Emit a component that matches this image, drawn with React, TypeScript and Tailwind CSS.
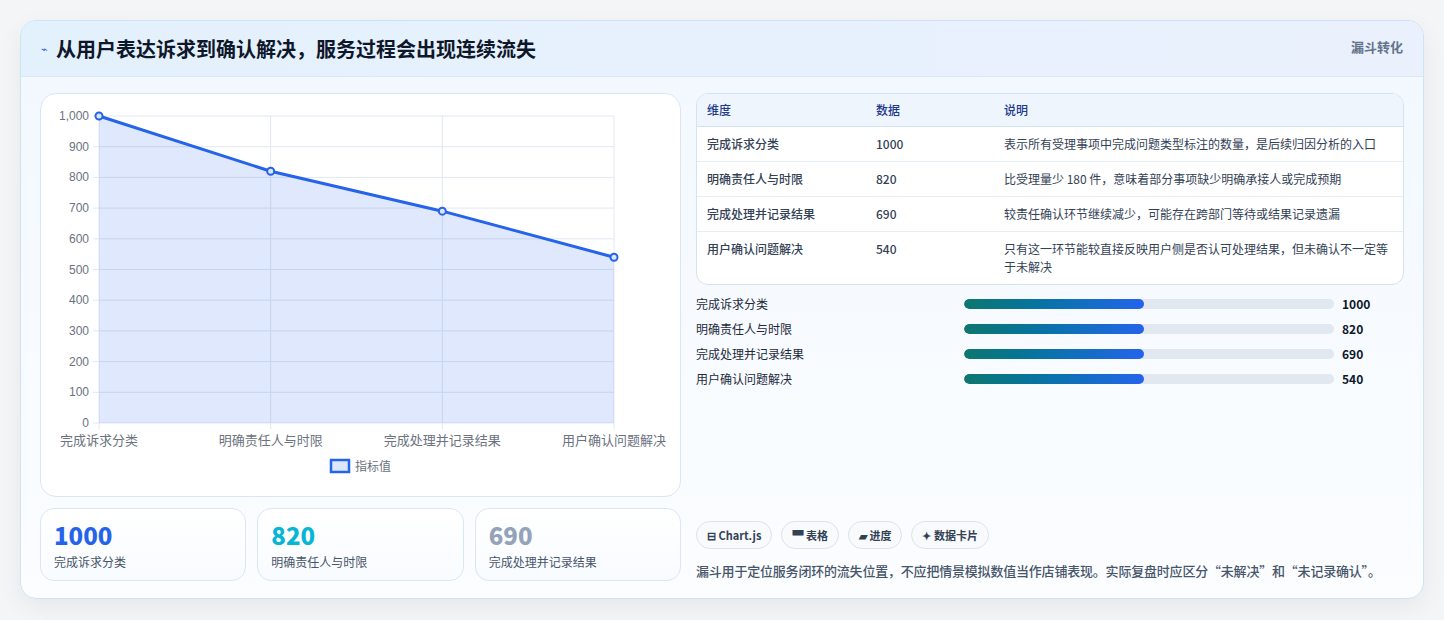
import React from "react";

const rows = [
  ["完成诉求分类", "1000", "表示所有受理事项中完成问题类型标注的数量，是后续归因分析的入口"],
  ["明确责任人与时限", "820", "比受理量少 180 件，意味着部分事项缺少明确承接人或完成预期"],
  ["完成处理并记录结果", "690", "较责任确认环节继续减少，可能存在跨部门等待或结果记录遗漏"],
  ["用户确认问题解决", "540", "只有这一环节能较直接反映用户侧是否认可处理结果，但未确认不一定等于未解决"],
];

function Chart() {
  const x0 = 58, x1 = 573, yTop = 22, yBot = 329;
  const ys = (v: number) => yBot - (v / 1000) * (yBot - yTop);
  const xs = [0, 1, 2, 3].map((i) => x0 + (i * (x1 - x0)) / 3);
  const vals = [1000, 820, 690, 540];
  const labels = ["完成诉求分类", "明确责任人与时限", "完成处理并记录结果", "用户确认问题解决"];
  const pts = xs.map((x, i) => `${x},${ys(vals[i])}`).join(" ");
  return (
    <svg width="640" height="400" className="block" style={{ fontFamily: "'Liberation Sans','Noto Sans CJK SC',sans-serif" }}>
      {Array.from({ length: 11 }, (_, i) => i * 100).map((v) => (
        <g key={v}>
          <line x1={x0 - 6} x2={x1} y1={ys(v)} y2={ys(v)} stroke="#e2e8f0" />
          <text x={x0 - 10} y={ys(v) + 4} textAnchor="end" fontSize="12" fill="#6b7280">
            {v === 1000 ? "1,000" : v}
          </text>
        </g>
      ))}
      {xs.map((x, i) => (
        <g key={i}>
          <line x1={x} x2={x} y1={yTop} y2={yBot + 6} stroke="#e2e8f0" />
          <text x={i === 3 ? 573 : i === 0 ? 58 : x} y={yBot + 22} textAnchor="middle" fontSize="13" fill="#6b7280">{labels[i]}</text>
        </g>
      ))}
      <polygon points={`${x0},${yBot} ${pts} ${x1},${yBot}`} fill="rgba(37,99,235,0.15)" />
      <polyline points={pts} fill="none" stroke="#2563eb" strokeWidth="3" />
      {xs.map((x, i) => (
        <circle key={i} cx={x} cy={ys(vals[i])} r="3.5" fill="#dbe6fb" stroke="#2563eb" strokeWidth="2" />
      ))}
      <rect x="290" y="366" width="18" height="12" fill="#dbe6fb" stroke="#2563eb" strokeWidth="2.5" />
      <text x="314" y="377" fontSize="12" fill="#6b7280">指标值</text>
    </svg>
  );
}

export default function App() {
  return (
    <div className="w-[1444px] h-[620px] bg-[#f4f5f7] pt-[20px] pl-[20px]" style={{ fontFamily: "'Noto Sans CJK SC','Liberation Sans',sans-serif" }}>
      <div className="w-[1404px] h-[579px] rounded-[16px] border border-[#cfe3f3] bg-gradient-to-b from-[#f2f8fe] to-[#fbfdff] overflow-hidden shadow-[0_8px_24px_rgba(15,23,42,0.06)]">
        <div className="h-[56px] flex items-center justify-between px-[20px] bg-gradient-to-r from-[#e3f1fd] to-[#eaf1fd] border-b border-[#dbe8f5]">
          <div className="flex items-center gap-[8px]">
            <span className="text-[#2563eb] text-[11px]">⌁</span>
            <span className="text-[20px] font-bold text-[#0f172a]">从用户表达诉求到确认解决，服务过程会出现连续流失</span>
          </div>
          <span className="self-start mt-[16px] text-[13px] font-bold text-[#64748b]">漏斗转化</span>
        </div>
        <div className="flex gap-[15px] px-[19px] pt-[16px]">
          <div className="w-[641px] flex flex-col gap-[11px]">
            <div className="h-[404px] rounded-[16px] border border-[#dbe6f3] bg-white overflow-hidden">
              <Chart />
            </div>
            <div className="flex gap-[11px]">
              {[
                ["1000", "text-[#2563eb]", "完成诉求分类"],
                ["820", "text-[#06b6d4]", "明确责任人与时限"],
                ["690", "text-[#94a3b8]", "完成处理并记录结果"],
              ].map(([v, c, l]) => (
                <div key={v} className="flex-1 h-[73px] rounded-[14px] border border-[#dbe6f3] bg-gradient-to-b from-white to-[#f8fbff] px-[13px] pt-[12px]">
                  <div className={`text-[24px] font-black leading-[28px] ${c}`}>{v}</div>
                  <div className="text-[12px] text-[#475569] mt-[4px]">{l}</div>
                </div>
              ))}
            </div>
          </div>
          <div className="w-[710px] h-[488px] flex flex-col">
            <div className="rounded-[12px] border border-[#d5e2ef] bg-white overflow-hidden text-[12px]">
              <div className="flex h-[33px] items-center bg-[#eef5fd] border-b border-[#d5e2ef] text-[#1e3a8a] font-medium">
                <div className="w-[179px] pl-[10px]">维度</div>
                <div className="w-[128px]">数据</div>
                <div className="flex-1">说明</div>
              </div>
              {rows.map((r, i) => (
                <div key={i} className={`flex py-[8px] leading-[18px] text-[#334155] ${i < 3 ? "border-b border-[#e5edf5]" : ""}`}>
                  <div className="w-[179px] pl-[10px] font-medium">{r[0]}</div>
                  <div className="w-[128px] font-medium">{r[1]}</div>
                  <div className="flex-1 pr-[14px]">{r[2]}</div>
                </div>
              ))}
            </div>
            <div className="mt-[10px] flex flex-col gap-[7px]">
              {rows.map((r) => (
                <div key={r[0]} className="flex items-center h-[18px] text-[12px]">
                  <div className="w-[268px] text-[#1e293b]">{r[0]}</div>
                  <div className="w-[370px] h-[10px] rounded-full bg-[#e2e8f0] overflow-hidden">
                    <div className="w-[180px] h-full rounded-full bg-gradient-to-r from-[#0f766e] to-[#2563eb]" />
                  </div>
                  <div className="ml-[8px] font-bold text-[#0f172a]">{r[1]}</div>
                </div>
              ))}
            </div>
            <div className="mt-auto flex gap-[9px]">
              {["⊟ Chart.js", "▀ 表格", "▰ 进度", "✦ 数据卡片"].map((t) => (
                <span key={t} className="h-[28px] px-[10px] flex items-center rounded-full border border-[#dbe3ec] bg-[#f8fafc] text-[11px] font-bold text-[#334155]">{t}</span>
              ))}
            </div>
            <div className="mt-[12px] text-[13px] font-medium text-[#475569] leading-[20px] tracking-[-0.2px]">
              漏斗用于定位服务闭环的流失位置，不应把情景模拟数值当作店铺表现。实际复盘时应区分“未解决”和“未记录确认”。
            </div>
          </div>
        </div>
      </div>
    </div>
  );
}
